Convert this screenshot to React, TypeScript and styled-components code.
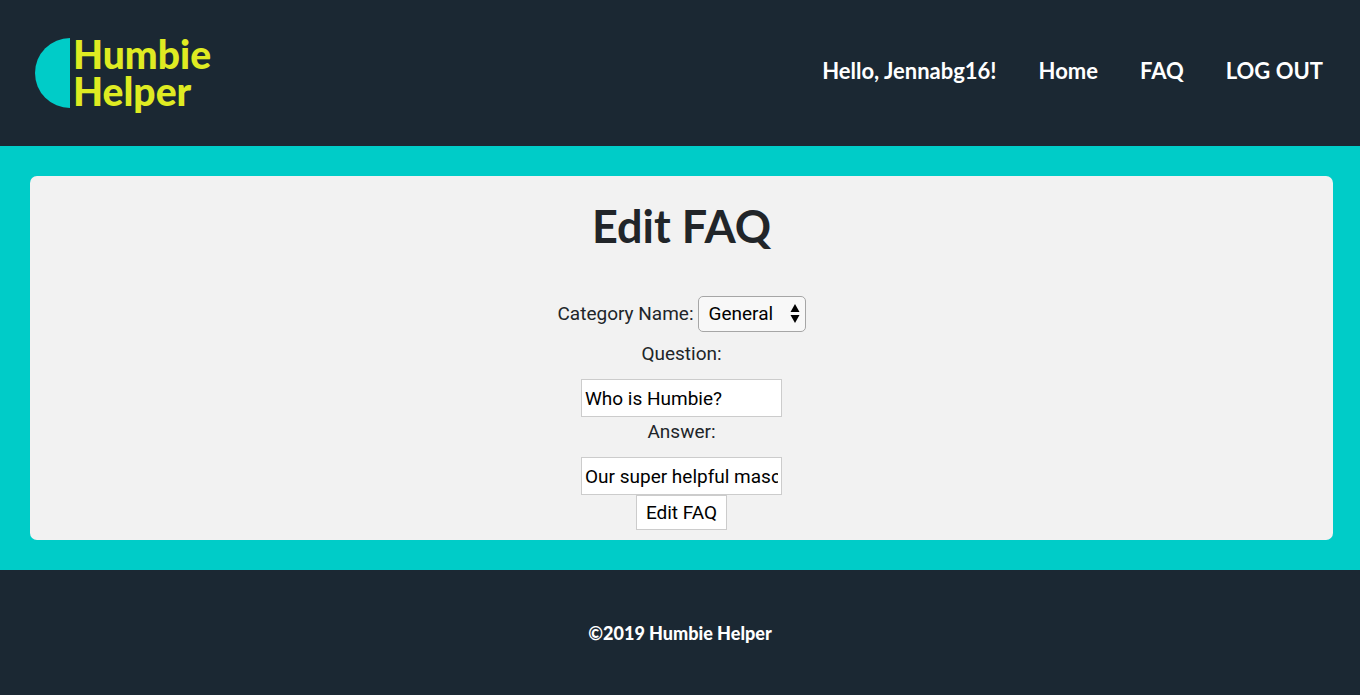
import React from "react";
import styled, { createGlobalStyle } from "styled-components";

const display = `Lato, "Open Sans", sans-serif`;
const body = `Roboto, "Noto Sans", sans-serif`;

const GlobalStyle = createGlobalStyle`
  *, *::before, *::after { box-sizing: border-box; }
  body {
    margin: 0;
    background: #1b2833;
    color: #212529;
    font: 400 19px/30px ${body};
  }
`;

const Page = styled.div`
  display: flex;
  flex-direction: column;
  min-height: 100vh;
`;

const Header = styled.header`
  display: flex;
  align-items: center;
  justify-content: space-between;
  padding: 36px 37px 36px 35px;
  background: #1b2833;
`;

const Logo = styled.a`
  display: flex;
  align-items: center;
  gap: 3px;
  color: #dfeb22;
  font: 900 39px/37px ${display};
  text-decoration: none;
`;

const HalfDisc = styled.span`
  width: 35px;
  height: 70px;
  border-radius: 35px 0 0 35px;
  background: #00ccc8;
`;

const LogoText = styled.span`
  display: flex;
  flex-direction: column;
`;

const Nav = styled.nav`
  display: flex;
  gap: 42px;
  padding-bottom: 4px;
  color: #fff;
  font: 700 22px/36px ${display};
`;

const NavLink = styled.a`
  color: inherit;
  text-decoration: none;
`;

const Main = styled.main`
  padding: 30px 27px 30px 30px;
  background: #00ccc8;
`;

const Panel = styled.section`
  padding: 20px 10px 10px;
  border-radius: 7px;
  background: #f2f2f2;
`;

const Title = styled.h1`
  margin: 0 0 40px;
  font: 700 45px/60px ${display};
  text-align: center;
`;

const Form = styled.form`
  display: flex;
  flex-direction: column;
  align-items: center;
`;

const CategoryRow = styled.div`
  display: flex;
  align-items: center;
  gap: 4px;
  margin-bottom: 7px;
`;

const FieldLabel = styled.label`
  margin-bottom: 10px;
`;

const SelectWrap = styled.div`
  position: relative;
  display: flex;
`;

const Select = styled.select`
  appearance: none;
  width: 108px;
  height: 36px;
  padding: 0 10px;
  border: 1px solid #a6a6a6;
  border-radius: 5px;
  background: #f8f8f8;
  color: #000;
  font: inherit;
  line-height: 34px;
`;

const Arrows = styled.svg`
  position: absolute;
  top: 8px;
  right: 6px;
  pointer-events: none;
`;

const TextInput = styled.input`
  width: 201px;
  height: 38px;
  padding: 1px 3px;
  border: 1px solid #ccc;
  border-radius: 0;
  background: #fff;
  color: #000;
  font: inherit;
`;

const SubmitButton = styled.button`
  height: 35px;
  padding: 0 9px;
  border: 1px solid #ccc;
  background: #fff;
  color: #000;
  font: inherit;
`;

const Footer = styled.footer`
  flex: 1;
  padding: 48px 20px 47px;
  background: #1b2833;
  color: #fff;
  font: 900 18px/30px ${display};
  text-align: center;
`;

export default function App() {
  return (
    <Page>
      <GlobalStyle />
      <Header>
        <Logo href="#">
          <HalfDisc />
          <LogoText>
            <span>Humbie</span>
            <span>Helper</span>
          </LogoText>
        </Logo>
        <Nav>
          <span>Hello, Jennabg16!</span>
          <NavLink href="#">Home</NavLink>
          <NavLink href="#">FAQ</NavLink>
          <NavLink href="#">LOG OUT</NavLink>
        </Nav>
      </Header>
      <Main>
        <Panel>
          <Title>Edit FAQ</Title>
          <Form onSubmit={(e) => e.preventDefault()}>
            <CategoryRow>
              <label htmlFor="category">Category Name:</label>
              <SelectWrap>
                <Select id="category" defaultValue="General">
                  <option>General</option>
                </Select>
                <Arrows width="10" height="20" viewBox="0 0 10 20" aria-hidden="true">
                  <path d="M5 0 9.5 8H.5ZM.5 11h9L5 19Z" fill="#000" />
                </Arrows>
              </SelectWrap>
            </CategoryRow>
            <FieldLabel htmlFor="question">Question:</FieldLabel>
            <TextInput id="question" defaultValue="Who is Humbie?" />
            <FieldLabel htmlFor="answer">Answer:</FieldLabel>
            <TextInput id="answer" defaultValue="Our super helpful mascot" />
            <SubmitButton type="submit">Edit FAQ</SubmitButton>
          </Form>
        </Panel>
      </Main>
      <Footer>©2019 Humbie Helper</Footer>
    </Page>
  );
}
